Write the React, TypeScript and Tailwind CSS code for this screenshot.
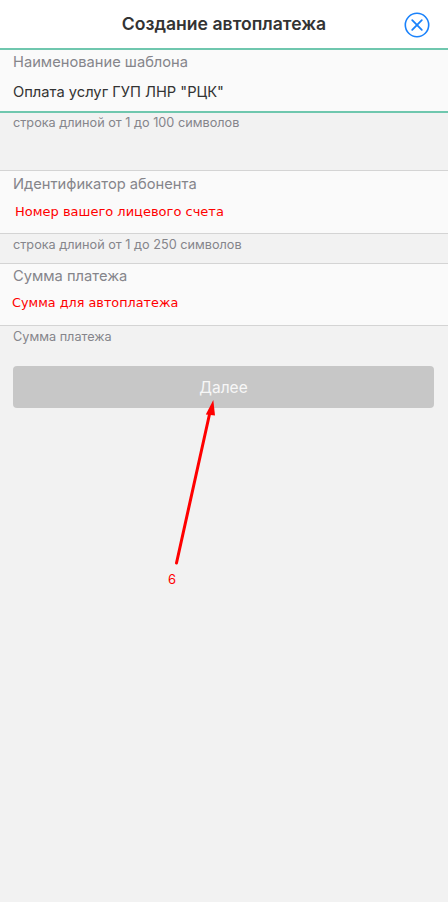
import { ReactNode } from "react";

type FieldProps = {
    label: string;
    hint: string;
    children: ReactNode;
    active?: boolean;
    boxClass: string;
    labelClass: string;
    hintClass: string;
};

function Field({ label, hint, children, active, boxClass, labelClass, hintClass }: FieldProps) {
    const line = active ? "border-[#6fc7ae] border-y-2" : "border-[#d4d4d4] border-y";
    return (
        <div>
            <div className={`bg-[#fafafa] px-[13px] ${boxClass} ${line}`}>
                <p className={`text-[14.7px] leading-[20px] text-[#85858b] ${labelClass}`}>{label}</p>
                {children}
            </div>
            <p className={`px-[13px] text-[12.7px] leading-[18px] text-[#85858b] ${hintClass}`}>{hint}</p>
        </div>
    );
}

export default function App() {
    return (
        <div className="relative h-[902px] w-[448px] overflow-hidden bg-[#f2f2f2] font-['Inter','Liberation_Sans',sans-serif]">
            <header className="relative flex h-[48px] items-center justify-center bg-white">
                <h1 className="text-[17.6px] font-semibold text-[#333333]">Создание автоплатежа</h1>
                <svg className="absolute left-[404px] top-[12px]" width="26" height="26" viewBox="0 0 26 26" fill="none" stroke="#1a82fb">
                    <circle cx="13" cy="13" r="11.7" strokeWidth="1.6" />
                    <path d="M8.2 8.2 17.8 17.8M17.8 8.2 8.2 17.8" strokeWidth="1.8" strokeLinecap="round" />
                </svg>
            </header>

            <Field label="Наименование шаблона" hint="строка длиной от 1 до 100 символов" active boxClass="h-[65px]" labelClass="pt-[2px]" hintClass="h-[57px] pt-[1px]">
                <p className="pt-[9px] text-[14.7px] leading-[22px] text-[#333333]">Оплата услуг ГУП ЛНР "РЦК"</p>
            </Field>
            <Field label="Идентификатор абонента" hint="строка длиной от 1 до 250 символов" boxClass="h-[64px]" labelClass="pt-[3px]" hintClass="h-[29px] pt-[2px]">
                <p className="pl-[2px] pt-[7px] font-['DejaVu_Sans',sans-serif] text-[13px] leading-[22px] text-[#ff0000]">Номер вашего лицевого счета</p>
            </Field>
            <Field label="Сумма платежа" hint="Сумма платежа" boxClass="h-[63px]" labelClass="pt-[2px]" hintClass="pt-[2px]">
                <p className="-ml-px pt-[6px] font-['DejaVu_Sans',sans-serif] text-[12.8px] leading-[22px] text-[#ff0000]">Сумма для автоплатежа</p>
            </Field>

            <div className="px-[13px] pt-[20px]">
                <button className="h-[42px] w-[421px] rounded-[4px] bg-[#c7c7c7] pt-[1px] text-[15.5px] text-[#f7f7f7]">Далее</button>
            </div>

            {/* annotation over the page */}
            <svg className="absolute left-0 top-0" width="448" height="902" fill="none">
                <path d="M176.500 563 210 412" stroke="#ff0000" strokeWidth="3" strokeLinecap="round" />
                <path d="M213.300 400 205.800 414.500 215 415.500Z" fill="#ff0000" />
            </svg>
            <span className="absolute left-[168px] top-[571px] text-[13px] leading-[16px] text-[#ff0000]">6</span>
        </div>
    );
}
